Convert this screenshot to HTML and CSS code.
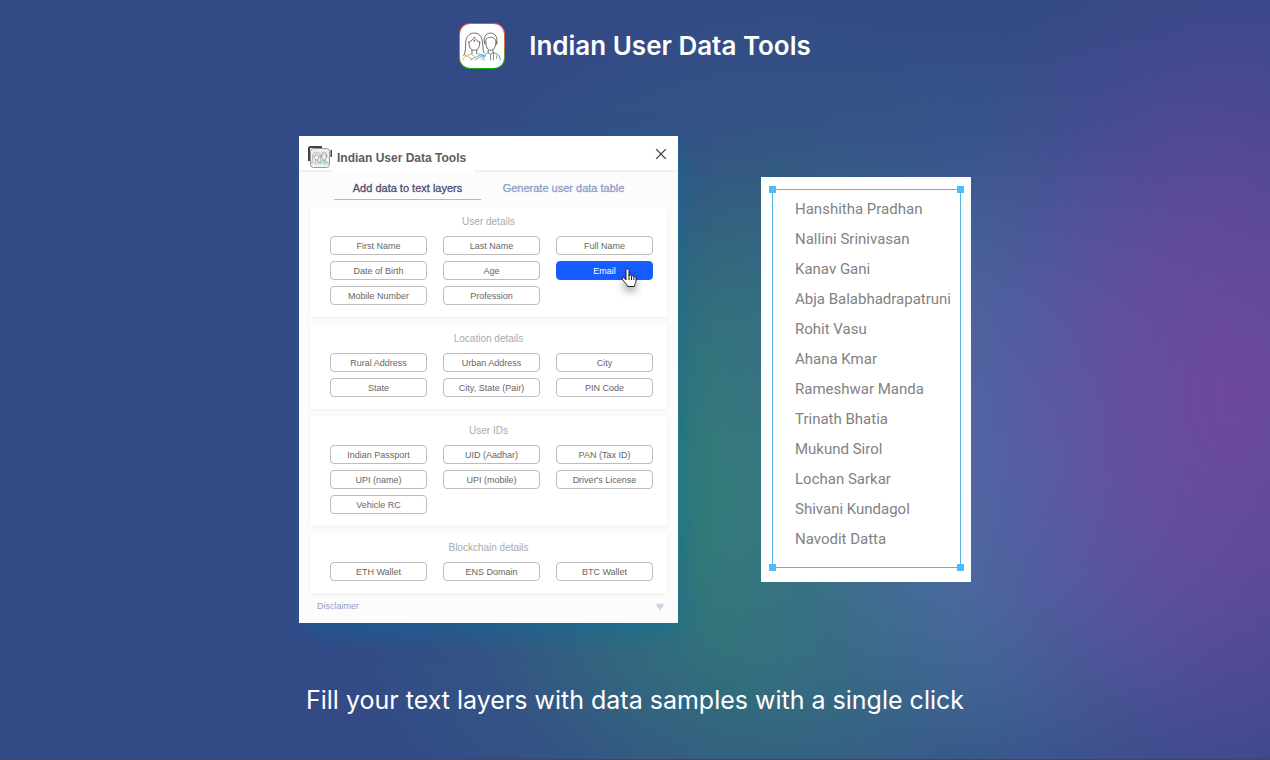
FILE: index.html
```html
<!DOCTYPE html>
<html lang="en">
<head>
  <meta charset="utf-8">
  <title>Indian User Data Tools</title>
  <link rel="stylesheet" href="styles.css">
</head>
<body>
  <!-- shared drawing of the couple, used by both logos -->
  <svg class="symbols" aria-hidden="true">
    <symbol id="couple" viewBox="0 0 46 46">
      <g fill="none" stroke="#666" stroke-width="1" stroke-linecap="round">
        <path d="M4 33C6.500 28 5.500 24 6 19C6.500 13 10 9.500 15 9.500S23 13 23.500 19C24 24 24 27 25 30"/>
        <path d="M9 19C12 18 14 16 15 13.500C16 16 18 18 21 19"/>
        <path d="M9.500 19C9 25 12 27.500 15 27.500S21 25 20.500 19M12.500 27v4M17.500 27v4"/>
        <path d="M26 21C23.500 14 27 9.500 32 9.500S40 14 38 21"/>
        <path d="M27 19C26.500 15.500 28 14 31 14C34 14 37 14 37.500 19C37.500 24 35 27.500 32 27.500S27 24 27 19M38 18c1.500 0 1 3-.5 3.500M29.500 27v3l2.500 2 2.500-2v-3"/>
      </g>
      <g fill="none" stroke-width="1" stroke-linecap="round">
        <path stroke="#dfa36b" d="M3.500 37C4 33 8 32.500 12 31.500L15 34M6 33l6 3"/>
        <path stroke="#57b5c2" d="M11 37.500l12-6M16 37.500l8-5M19 31l5 2M22 37l3-5v6"/>
        <path stroke="#4b9d90" d="M29 30c-2 1-3 2-3 4M32 33v4.500M35 30v7.500M35 30l3 1c3 1 4 3 4 6.500M38.500 33v3"/>
      </g>
      <circle cx="15" cy="17.500" r="1" fill="#e64b3b"/>
    </symbol>
  </svg>

  <header class="page-header">
    <div class="app-logo">
      <svg viewBox="0 0 46 46"><use href="#couple"/></svg>
    </div>
    <h1>Indian User Data Tools</h1>
  </header>

  <main class="stage">
    <section class="plugin">
      <div class="plugin-header">
        <div class="plugin-logo">
          <svg viewBox="0 0 24 23" aria-hidden="true">
            <path d="M1 15V2.500Q1 1 2.500 1H14M23.500 4v7" fill="none" stroke="#444" stroke-width="2"/>
            <rect x="2.500" y="2.500" width="19" height="19" rx="3" fill="#f0f0f0" stroke="#999"/>
            <svg x="2" y="2" width="20" height="20"><use href="#couple"/></svg>
          </svg>
        </div>
        <h2>Indian User Data Tools</h2>
        <button class="close" aria-label="Close">
          <svg viewBox="0 0 10 10"><path d="M1 1l8 8M9 1l-8 8"/></svg>
        </button>
      </div>

      <nav class="tabs">
        <button class="tab active">Add data to text layers</button>
        <button class="tab">Generate user data table</button>
      </nav>

      <div class="groups">
        <div class="group">
          <h3>User details</h3>
          <div class="options">
            <button>First Name</button>
            <button>Last Name</button>
            <button>Full Name</button>
            <button>Date of Birth</button>
            <button>Age</button>
            <button class="selected">Email
              <svg class="cursor" viewBox="0 0 16 20" aria-hidden="true"><path d="M5 12V2.500C5 .5 8 .5 8 2.500V8C8 6.500 10.500 6.500 10.500 8.500C10.500 7.200 12.800 7.500 12.800 9C13 8 15 8.500 15 10V13C15 15 13.500 16 13.500 18.500H6.500C6 16 3.500 14.500 1.500 11.500C.5 10 2.500 9 3.500 10.200ZM8 8v4M10.500 8.500V12M12.800 9v3"/></svg>
            </button>
            <button>Mobile Number</button>
            <button>Profession</button>
          </div>
        </div>

        <div class="group">
          <h3>Location details</h3>
          <div class="options">
            <button>Rural Address</button>
            <button>Urban Address</button>
            <button>City</button>
            <button>State</button>
            <button>City, State (Pair)</button>
            <button>PIN Code</button>
          </div>
        </div>

        <div class="group">
          <h3>User IDs</h3>
          <div class="options">
            <button>Indian Passport</button>
            <button>UID (Aadhar)</button>
            <button>PAN (Tax ID)</button>
            <button>UPI (name)</button>
            <button>UPI (mobile)</button>
            <button>Driver's License</button>
            <button>Vehicle RC</button>
          </div>
        </div>

        <div class="group">
          <h3>Blockchain details</h3>
          <div class="options">
            <button>ETH Wallet</button>
            <button>ENS Domain</button>
            <button>BTC Wallet</button>
          </div>
        </div>
      </div>

      <div class="plugin-footer">
        <a href="#">Disclaimer</a>
        <span class="heart">♥</span>
      </div>
    </section>

    <section class="artboard">
      <div class="selection">
        <i class="handle top left"></i>
        <i class="handle top right"></i>
        <i class="handle bottom left"></i>
        <i class="handle bottom right"></i>
        <ul class="names">
          <li>Hanshitha Pradhan</li>
          <li>Nallini Srinivasan</li>
          <li>Kanav Gani</li>
          <li>Abja Balabhadrapatruni</li>
          <li>Rohit Vasu</li>
          <li>Ahana Kmar</li>
          <li>Rameshwar Manda</li>
          <li>Trinath Bhatia</li>
          <li>Mukund Sirol</li>
          <li>Lochan Sarkar</li>
          <li>Shivani Kundagol</li>
          <li>Navodit Datta</li>
        </ul>
      </div>
    </section>
  </main>

  <p class="caption">Fill your text layers with data samples with a single click</p>
</body>
</html>
```
FILE: styles.css
```css
* {
  box-sizing: border-box;
}

body {
  margin: 0;
  min-height: 100vh;
  display: flex;
  flex-direction: column;
  align-items: center;
  font-family: "Liberation Sans", Arial, sans-serif;
  color: white;
  border-bottom: 1px solid #3f4668;
  background:
    radial-gradient(ellipse 24% 64% at 97% 52%, rgba(112,72,158,0.95), rgba(108,72,156,0.7) 40%, rgba(90,70,150,0.3) 75%, transparent),
    radial-gradient(ellipse 27% 58% at 81% 59%, rgba(84,108,172,0.95), rgba(80,104,168,0.8) 35%, rgba(66,92,156,0.3) 72%, transparent),
    radial-gradient(ellipse 38% 66% at 62% 64%, rgba(50,132,118,1), rgba(50,124,120,0.8) 35%, rgba(50,104,128,0.3) 72%, transparent),
    #344a86;
}

h1, h2, h3, p, ul {
  margin: 0;
  padding: 0;
}

button {
  font-family: inherit;
  margin: 0;
  padding: 0;
  border: none;
  background: none;
  cursor: pointer;
}

.symbols {
  position: absolute;
  width: 0;
  height: 0;
}

.page-header {
  display: flex;
  align-items: center;
  gap: 24px;
  margin-top: 23px;
}

.page-header h1 {
  font-family: Inter, sans-serif;
  font-size: 26px;
  font-weight: 600;
  line-height: 46px;
}

.app-logo {
  width: 46px;
  height: 46px;
  border: 1px solid transparent;
  border-radius: 11px;
  background: linear-gradient(white, white) padding-box, linear-gradient(#f04a4a, #b98a4a 50%, #15b015) border-box;
}

.app-logo svg,
.plugin-logo > svg {
  display: block;
  width: 100%;
  height: 100%;
}

.stage {
  display: flex;
  align-items: center;
  gap: 83px;
  margin-top: 67px;
}

/* plugin window */
.plugin {
  width: 379px;
  background-color: #fcfcfd;
  box-shadow: 4px 10px 24px rgba(0,110,165,0.45);
}

.plugin-header {
  display: flex;
  align-items: flex-start;
  height: 36px;
  padding: 0 11px 0 9px;
  background-color: white;
  border-bottom: 2px solid #f2f2f3;
}

.plugin-logo {
  width: 24px;
  height: 23px;
  margin-top: 10px;
}

.plugin-header h2 {
  height: 36px;
  padding: 0 8px 0 5px;
  background-color: white;
  color: #5c5c5c;
  font-size: 12px;
  line-height: 44px;
  -webkit-font-smoothing: antialiased;
}

.close {
  width: 12px;
  height: 12px;
  margin: 12px 0 0 auto;
}

.close svg {
  display: block;
  fill: none;
  stroke: #333;
}

.tabs {
  display: flex;
  justify-content: center;
  gap: 9px;
  height: 35px;
  padding-right: 6px;
}

.tab {
  width: 147px;
  height: 28px;
  padding-top: 4px;
  color: #8f9dc6;
  font-size: 11px;
  -webkit-text-stroke: 0.3px;
}

.tab.active {
  color: #4d4d75;
  border-bottom: 1px solid #84c3fb;
}

.groups {
  display: flex;
  flex-direction: column;
  gap: 7px;
  padding: 0 11px;
}

.group {
  padding-bottom: 12px;
  background-color: white;
  box-shadow: 0 1px 4px rgba(60,60,80,0.08);
}

.group h3 {
  color: #aaa;
  font-size: 10px;
  font-weight: normal;
  line-height: 29px;
  text-align: center;
}

.options {
  display: grid;
  grid-template-columns: repeat(3, 1fr);
  gap: 6px 16px;
  padding: 0 14px 0 20px;
}

.options button {
  position: relative;
  height: 19px;
  border: 1px solid #bcbcbc;
  border-radius: 4px;
  background-color: white;
  color: #666;
  font-size: 9px;
}

.options .selected {
  border-color: #175cff;
  background-color: #175cff;
  color: white;
}

.cursor {
  position: absolute;
  top: 6px;
  right: 15px;
  width: 16px;
  height: 20px;
  fill: white;
  stroke: #222;
  filter: drop-shadow(0 5px 4px rgba(0,0,0,0.35));
}

.plugin-footer {
  display: flex;
  align-items: center;
  justify-content: space-between;
  height: 30px;
  padding: 0 14px 4px 18px;
}

.plugin-footer a {
  color: #8f9dc6;
  font-size: 9px;
  text-decoration: none;
}

.heart {
  color: #cdd3e8;
  font-size: 14px;
}

/* filled text layers */
.artboard {
  width: 210px;
  padding: 12px 10px 14px 11px;
  background-color: white;
}

.selection {
  position: relative;
  padding: 4px 0 13px 22px;
  border: 1px solid #57b4ec;
}

.handle {
  position: absolute;
  width: 7px;
  height: 7px;
  background-color: #4cbcff;
}

.top { top: -4px; }
.bottom { bottom: -4px; }
.left { left: -4px; }
.right { right: -4px; }

.names {
  list-style: none;
  color: #828282;
  font-family: Roboto, sans-serif;
  font-size: 15px;
  line-height: 30px;
  white-space: nowrap;
}

.caption {
  margin-top: 60px;
  font-family: Inter, sans-serif;
  font-size: 25px;
  line-height: 34px;
  text-align: center;
}
```
